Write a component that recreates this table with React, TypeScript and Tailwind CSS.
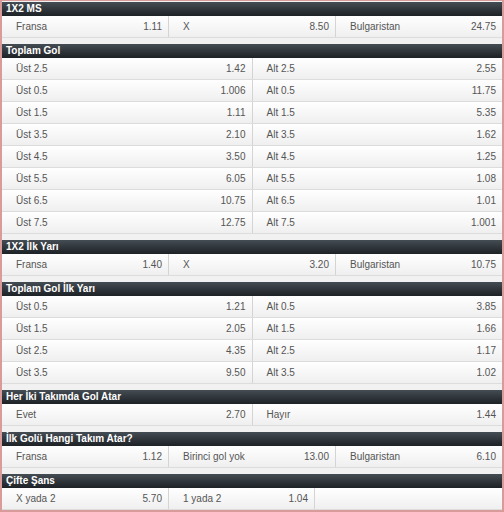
import React from "react";

type Cell = { label: string; odd: string } | null;

type Market = {
  title: string;
  cols: number;
  rows: Cell[][];
  narrow?: boolean;
};

const markets: Market[] = [
  {
    title: "1X2 MS",
    cols: 3,
    rows: [[{ label: "Fransa", odd: "1.11" }, { label: "X", odd: "8.50" }, { label: "Bulgaristan", odd: "24.75" }]],
  },
  {
    title: "Toplam Gol",
    cols: 2,
    rows: [
      ["2.5", "1.42", "2.55"],
      ["0.5", "1.006", "11.75"],
      ["1.5", "1.11", "5.35"],
      ["3.5", "2.10", "1.62"],
      ["4.5", "3.50", "1.25"],
      ["5.5", "6.05", "1.08"],
      ["6.5", "10.75", "1.01"],
      ["7.5", "12.75", "1.001"],
    ].map(([l, o, a]) => [
      { label: `Üst ${l}`, odd: o },
      { label: `Alt ${l}`, odd: a },
    ]),
  },
  {
    title: "1X2 İlk Yarı",
    cols: 3,
    rows: [[{ label: "Fransa", odd: "1.40" }, { label: "X", odd: "3.20" }, { label: "Bulgaristan", odd: "10.75" }]],
  },
  {
    title: "Toplam Gol İlk Yarı",
    cols: 2,
    rows: [
      ["0.5", "1.21", "3.85"],
      ["1.5", "2.05", "1.66"],
      ["2.5", "4.35", "1.17"],
      ["3.5", "9.50", "1.02"],
    ].map(([l, o, a]) => [
      { label: `Üst ${l}`, odd: o },
      { label: `Alt ${l}`, odd: a },
    ]),
  },
  {
    title: "Her İki Takımda Gol Atar",
    cols: 2,
    rows: [[{ label: "Evet", odd: "2.70" }, { label: "Hayır", odd: "1.44" }]],
  },
  {
    title: "İlk Golü Hangi Takım Atar?",
    cols: 3,
    rows: [[{ label: "Fransa", odd: "1.12" }, { label: "Birinci gol yok", odd: "13.00" }, { label: "Bulgaristan", odd: "6.10" }]],
  },
  {
    title: "Çifte Şans",
    cols: 3,
    narrow: true,
    rows: [[{ label: "X yada 2", odd: "5.70" }, { label: "1 yada 2", odd: "1.04" }]],
  },
];

function OddCell({ cell, last, width }: { cell: Cell; last: boolean; width?: string }) {
  if (!cell) return <div className="flex-1" />;
  return (
    <div
      className={`${width ?? "flex-1"} flex items-center justify-between pl-[14px] pr-[6px] ${
        last ? "" : "border-r border-[#d4d4d4]"
      }`}
    >
      <span className="text-[#555]">{cell.label}</span>
      <span className="text-[#555]">{cell.odd}</span>
    </div>
  );
}

function MarketBlock({ market }: { market: Market }) {
  return (
    <div className="flex flex-col">
      <div className="h-[14px] flex items-center pl-[4px] bg-gradient-to-b from-[#454d54] to-[#1d2226] text-white font-bold text-[10px]">
        {market.title}
      </div>
      {market.rows.map((row, i) => (
        <div
          key={i}
          className="h-[22px] flex bg-gradient-to-b from-white to-[#efefef] border-b border-[#dcdcdc]"
        >
          {market.narrow ? (
            <>
              <OddCell cell={row[0]} last={false} width="w-[167px]" />
              <OddCell cell={row[1]} last={false} width="w-[146px]" />
              <div className="flex-1" />
            </>
          ) : (
            row.map((c, j) => <OddCell key={j} cell={c} last={j === row.length - 1} />)
          )}
        </div>
      ))}
    </div>
  );
}

export default function App() {
  return (
    <div
      className="w-[504px] h-[512px] overflow-hidden border-l-2 border-r-2 border-t border-b-2 border-[#d99a9a] bg-[#f1f1f1]"
      style={{ fontFamily: '"Liberation Sans", Arial, sans-serif' }}
    >
      <div className="flex flex-col gap-[6px] pt-[1px] text-[10px] leading-none">
        {markets.map((m) => (
          <MarketBlock key={m.title} market={m} />
        ))}
      </div>
    </div>
  );
}
